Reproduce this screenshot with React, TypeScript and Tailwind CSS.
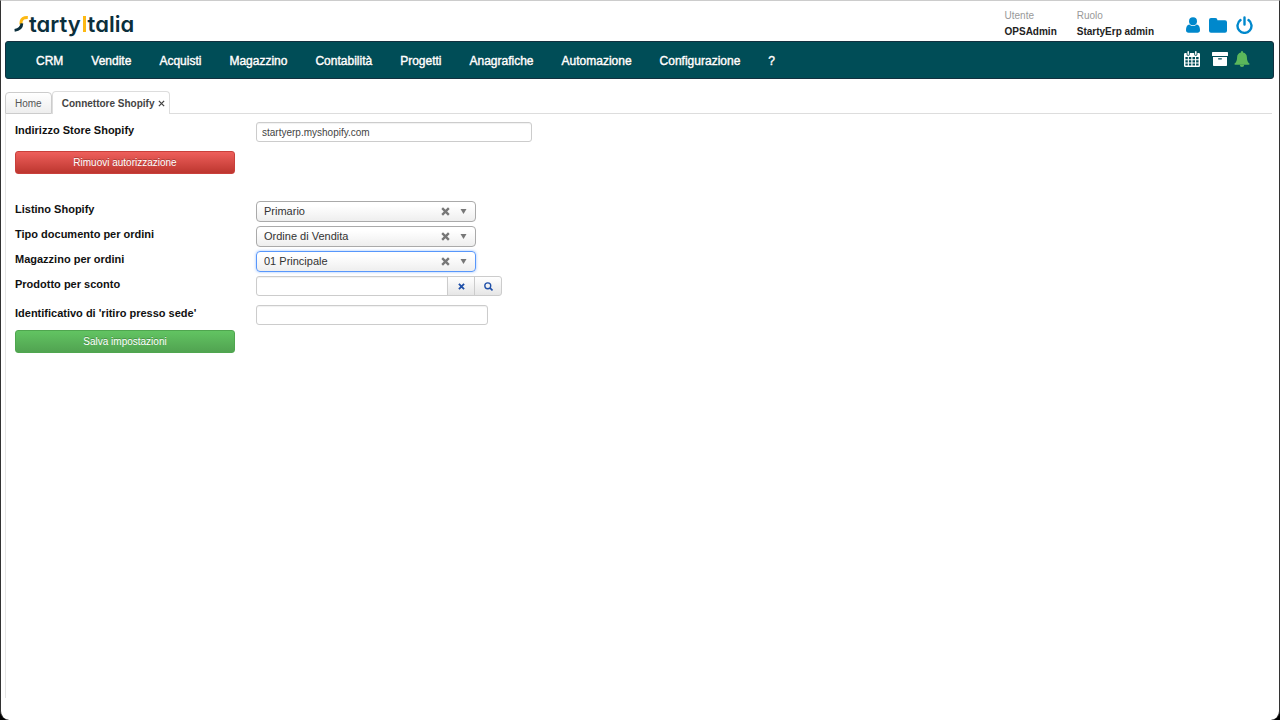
import { useState } from "react";
import type { ReactNode } from "react";

const MENU = [
  "CRM",
  "Vendite",
  "Acquisti",
  "Magazzino",
  "Contabilità",
  "Progetti",
  "Anagrafiche",
  "Automazione",
  "Configurazione",
  "?",
];

function Logo() {
  return (
    <a
      href="#"
      aria-label="StartyItalia"
      className="flex h-6 items-center font-['Inter','Lato',sans-serif] text-[22px] leading-6 font-semibold text-[#0b2f3c] [font-feature-settings:'cv11']"
    >
      <svg viewBox="0 0 15 16" className="h-4 w-[15px]" fill="none" aria-hidden="true">
        <path d="M13.800 1.600C10 1.400 7.800 2.800 7.200 5.200C7 6.400 7 7.400 6.900 8.600" stroke="#fdb913" strokeWidth="3" />
        <path d="M7.900 7.400C7.700 11.600 5 13.800 .6 14.300" stroke="#0b2f3c" strokeWidth="2.800" />
      </svg>
      <span>tarty</span>
      <span className="mx-[2px] h-4 w-[3px] bg-[#fdb913]" />
      <span>talia</span>
    </a>
  );
}

function UserIcon() {
  return (
    <svg viewBox="0 0 14 16" className="h-4 w-[14px]" fill="currentColor" aria-hidden="true">
      <circle cx="7" cy="4.200" r="4" />
      <path d="M3.400 7.400C1 7.800 0 10 0 13q0 2.800 2.600 2.800h8.800Q14 15.800 14 13c0-3-1-5.200-3.400-5.600A5.200 5.200 0 0 1 7 9 5.200 5.200 0 0 1 3.400 7.400Z" />
    </svg>
  );
}

function FolderIcon() {
  return (
    <svg viewBox="0 0 18 15" className="h-[15px] w-[18px]" fill="currentColor" aria-hidden="true">
      <path d="M2 0h4.400q2 0 2 2v.3H16q2 0 2 2V12.800q0 2-2 2H2q-2 0-2-2V2Q0 0 2 0Z" />
    </svg>
  );
}

function PowerIcon() {
  return (
    <svg viewBox="0 0 17 18" className="h-[18px] w-[17px]" fill="none" stroke="currentColor" strokeWidth="2.400" strokeLinecap="round" aria-hidden="true">
      <path d="M4.500 4.100A7 7 0 1 0 12.500 4.100M8.500 1.500v7" />
    </svg>
  );
}

function CalendarIcon() {
  return (
    <svg viewBox="0 0 16 16" className="size-4" aria-hidden="true">
      <path
        fill="#fff"
        fillRule="evenodd"
        d="M1.200 2H2.600V3.200a1.600 1.600 0 0 0 3.200 0V2h4.400v1.200a1.600 1.600 0 0 0 3.200 0V2h1.400q1.200 0 1.200 1.200v11.600q0 1.200-1.200 1.200H1.200Q0 16 0 14.800V3.200Q0 2 1.200 2ZM1.400 6v2.200h2.400V6Zm3.500 0v2.200h2.400V6Zm3.600 0v2.200h2.500V6Zm3.600 0v2.200h2.500V6ZM1.400 9.300v2.100h2.400V9.300Zm3.500 0v2.100h2.400V9.300Zm3.600 0v2.100h2.500V9.300Zm3.600 0v2.100h2.500V9.300ZM1.400 12.500v2.100h2.400v-2.100Zm3.500 0v2.100h2.400v-2.100Zm3.600 0v2.100h2.500v-2.100Zm3.600 0v2.100h2.500v-2.100Z"
      />
      <path d="M4.200 .8v2.400M11.800 .8v2.400" stroke="#fff" strokeWidth="1.500" strokeLinecap="round" />
    </svg>
  );
}

function ArchiveIcon() {
  return (
    <svg viewBox="0 0 16 14" className="h-[14px] w-4" fill="#fff" aria-hidden="true">
      <rect width="16" height="4" rx=".6" />
      <path
        fillRule="evenodd"
        d="M1 5h14v8.200q0 .8-.8.8H1.800Q1 14 1 13.200ZM6.600 6.200q-.6 0-.6.6t.6.6h2.800q.6 0 .6-.6t-.6-.6Z"
      />
    </svg>
  );
}

function BellIcon() {
  return (
    <svg viewBox="0 0 16 16" className="size-4" fill="#5bb75b" aria-hidden="true">
      <path d="M8 0q1 0 1 1v.5c2.500.5 3.900 2.300 3.900 4.700 0 3.400 1 5.200 2.700 6.500q.2 1.100-1 1.100H1.400q-1.200 0-1-1.100C2.100 11.400 3.100 9.600 3.100 6.200 3.100 3.800 4.500 2 7 1.500V1q0-1 1-1Z" />
      <path d="M5.800 13.800h4.400a2.200 2.200 0 0 1-4.400 0Z" />
    </svg>
  );
}

function Cross({ className }: { className: string }) {
  return (
    <svg viewBox="0 0 10 10" className={className} aria-hidden="true">
      <path d="M1.300 1.300l7.400 7.400M8.700 1.300L1.300 8.700" stroke="currentColor" strokeWidth="2.600" />
    </svg>
  );
}

function Row({ id, label, children }: { id: string; label: string; children: ReactNode }) {
  return (
    <div className="flex items-start">
      <label htmlFor={id} className="w-[241px] shrink-0 text-[11px] leading-4 font-bold text-[#111]">
        {label}
      </label>
      {children}
    </div>
  );
}

function ClearableSelect({ id, label, option, focused }: { id: string; label: string; option: string; focused?: boolean }) {
  const [value, setValue] = useState(option);
  return (
    <Row id={id} label={label}>
      <div className="relative w-[220px]">
        <select
          id={id}
          value={value}
          onChange={(e) => setValue(e.target.value)}
          className={
            "block h-[21px] w-full appearance-none rounded-[4px] border bg-linear-to-b from-white from-20% to-[#eee] pl-[7px] text-[11px] text-[#333] outline-none " +
            (focused ? "border-[#5897fb] shadow-[0_0_3px_rgba(88,151,251,0.6)]" : "border-[#aaa]")
          }
        >
          <option value=""></option>
          <option>{option}</option>
        </select>
        <button
          type="button"
          aria-label={"Cancella " + label}
          onClick={() => setValue("")}
          className="absolute top-[6px] right-[26px] text-[#777]"
        >
          <Cross className="size-[9px]" />
        </button>
        <svg viewBox="0 0 6 5" className="pointer-events-none absolute top-2 right-[9px] h-[5px] w-[7px]" aria-hidden="true">
          <path d="M0 0h6L3 5Z" fill="#777" />
        </svg>
      </div>
    </Row>
  );
}

const FIELD =
  "h-5 border border-[#ccc] bg-white px-[5px] text-[10px] text-[#444] outline-none shadow-[inset_0_1px_1px_rgba(0,0,0,0.06)]";

const ACTION =
  "h-[23px] w-[220px] rounded-[3px] border text-[10px] text-white [text-shadow:0_-1px_0_rgba(0,0,0,0.25)]";

export default function App() {
  return (
    <div className="min-h-screen bg-black font-['Liberation_Sans',Arial,sans-serif]">
      <div className="flex min-h-screen flex-col rounded-b-[9px] border-x border-t border-x-[#333] border-t-[#ccc] bg-white pr-[5px] pl-1">
        <header className="flex h-10 items-start justify-between">
          <div className="pt-[11px] pl-[9px]">
            <Logo />
          </div>
          <div className="flex pr-[21px]">
            <dl className="flex gap-5 pt-2 text-[10px]">
              <div>
                <dt className="leading-[14px] text-[#999]">Utente</dt>
                <dd className="leading-[18px] font-bold text-[#222]">OPSAdmin</dd>
              </div>
              <div>
                <dt className="leading-[14px] text-[#999]">Ruolo</dt>
                <dd className="leading-[18px] font-bold text-[#222]">StartyErp admin</dd>
              </div>
            </dl>
            <div className="ml-8 flex items-center gap-[9px] pt-2 text-[#0088cc]">
              <button type="button" aria-label="Profilo">
                <UserIcon />
              </button>
              <button type="button" aria-label="Documenti">
                <FolderIcon />
              </button>
              <button type="button" aria-label="Esci">
                <PowerIcon />
              </button>
            </div>
          </div>
        </header>

        <nav className="flex h-[38px] items-center justify-between rounded-[3px] border border-[#12303f] bg-[#004d57] pr-[23px] pl-[30px]">
          <ul className="flex gap-7">
            {MENU.map((item) => (
              <li key={item}>
                <a
                  href="#"
                  className="block pt-px text-[12px] leading-5 text-white [-webkit-text-stroke:0.4px_white] [text-shadow:0_1px_1px_rgba(0,0,0,0.3)]"
                >
                  {item}
                </a>
              </li>
            ))}
          </ul>
          <div className="flex items-center pb-[2px]">
            <button type="button" aria-label="Calendario">
              <CalendarIcon />
            </button>
            <button type="button" aria-label="Archivio" className="ml-3">
              <ArchiveIcon />
            </button>
            <button type="button" aria-label="Notifiche" className="ml-[6px]">
              <BellIcon />
            </button>
          </div>
        </nav>

        <div role="tablist" className="mt-3 mr-[2px] flex items-end">
          <button
            type="button"
            role="tab"
            aria-selected="false"
            className="h-[22px] rounded-t-[4px] border border-[#ccc] bg-linear-to-b from-white to-[#eee] px-[9px] text-[10px] text-[#555]"
          >
            Home
          </button>
          <div className="flex h-[23px] items-center gap-1 rounded-t-[4px] border border-b-0 border-[#ddd] pr-1 pl-[9px] text-[#444]">
            <button type="button" role="tab" aria-selected="true" className="text-[10px] font-bold">
              Connettore Shopify
            </button>
            <button type="button" aria-label="Chiudi scheda">
              <svg viewBox="0 0 8 8" className="size-[7px]" aria-hidden="true">
                <path d="M1 1l6 6M7 1L1 7" stroke="currentColor" strokeWidth="1.500" />
              </svg>
            </button>
          </div>
          <div className="flex-1 border-b border-[#ddd]" />
        </div>

        <main className="mb-[22px] flex-1 border-l border-[#e5e5e5] pt-2 pl-[9px]">
          <form onSubmit={(e) => e.preventDefault()}>
            <Row id="store" label="Indirizzo Store Shopify">
              <input id="store" defaultValue="startyerp.myshopify.com" className={FIELD + " w-[276px] rounded-[3px]"} />
            </Row>
            <button
              type="button"
              className={ACTION + " mt-[9px] border-[#c9403b] bg-linear-to-b from-[#ee5f5b] to-[#bd362f]"}
            >
              Rimuovi autorizzazione
            </button>

            <div className="mt-[27px] flex flex-col gap-1">
              <ClearableSelect id="listino" label="Listino Shopify" option="Primario" />
              <ClearableSelect id="tipo" label="Tipo documento per ordini" option="Ordine di Vendita" />
              <ClearableSelect id="magazzino" label="Magazzino per ordini" option="01 Principale" focused />
              <Row id="sconto" label="Prodotto per sconto">
                <div className="flex">
                  <input id="sconto" className={FIELD + " w-[192px] rounded-l-[3px]"} />
                  <button
                    type="button"
                    aria-label="Svuota prodotto"
                    className="-ml-px flex h-5 w-7 items-center justify-center border border-[#ccc] bg-linear-to-b from-white to-[#e6e6e6] text-[#1f4fa8]"
                  >
                    <Cross className="size-[7px]" />
                  </button>
                  <button
                    type="button"
                    aria-label="Cerca prodotto"
                    className="-ml-px flex h-5 w-7 items-center justify-center rounded-r-[3px] border border-[#ccc] bg-linear-to-b from-white to-[#e6e6e6] text-[#1f4fa8]"
                  >
                    <svg viewBox="0 0 10 10" className="size-[9px]" fill="none" stroke="currentColor" aria-hidden="true">
                      <circle cx="4.200" cy="4.200" r="3.300" strokeWidth="1.500" />
                      <path d="M6.600 6.600L9.400 9.400" strokeWidth="1.800" />
                    </svg>
                  </button>
                </div>
              </Row>
            </div>

            <div className="mt-[9px]">
              <Row id="ritiro" label="Identificativo di 'ritiro presso sede'">
                <input id="ritiro" className={FIELD + " w-[232px] rounded-[3px]"} />
              </Row>
            </div>
            <button
              type="submit"
              className={ACTION + " mt-[5px] border-[#4fa64f] bg-linear-to-b from-[#62c462] to-[#51a351]"}
            >
              Salva impostazioni
            </button>
          </form>
        </main>
      </div>
    </div>
  );
}
